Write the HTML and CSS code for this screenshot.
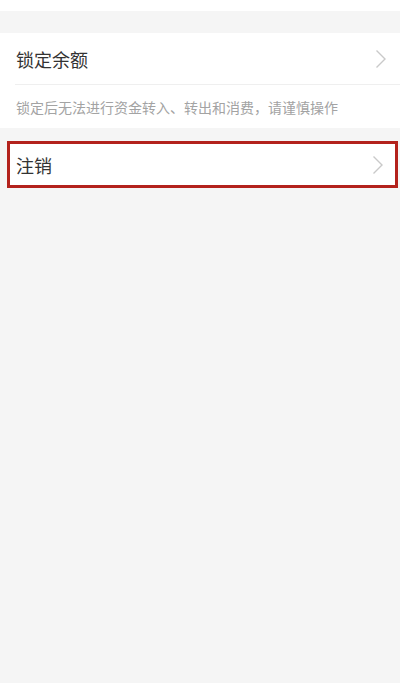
FILE: index.html
```html
<!DOCTYPE html>
<html lang="zh-CN">
<head>
<meta charset="utf-8">
<link rel="stylesheet" href="styles.css">
</head>
<body>
<div class="top"></div>
<div class="card">
  <div class="row">
    <span class="label">锁定余额</span>
    <svg class="chev" width="12" height="20" viewBox="0 0 12 20"><path d="M1.5 1.5 L10 10 L1.5 18.5" fill="none" stroke="#c9c9c9" stroke-width="1.4"/></svg>
  </div>
  <div class="sep"></div>
  <div class="desc">锁定后无法进行资金转入、转出和消费，请谨慎操作</div>
</div>
<div class="highlight">
  <div class="row row-small">
    <span class="label">注销</span>
    <svg class="chev" width="12" height="20" viewBox="0 0 12 20"><path d="M1.5 1.5 L10 10 L1.5 18.5" fill="none" stroke="#c9c9c9" stroke-width="1.4"/></svg>
  </div>
</div>
</body>
</html>
```
FILE: styles.css
```css
html, body {
  margin: 0;
  padding: 0;
  background: #f5f5f5;
  font-family: "Noto Sans CJK SC", "Noto Sans", sans-serif;
  width: 400px;
  height: 683px;
}
.top {
  height: 11px;
  background: #fff;
  margin-bottom: 22px;
}
.card {
  background: #fff;
  margin-bottom: 13px;
}
.row {
  height: 51px;
  display: flex;
  align-items: center;
  justify-content: space-between;
  padding: 0 13px 0 16px;
  background: #fff;
}
.row-small {
  height: 41px;
  padding-left: 6px;
  padding-right: 11px;
}
.label {
  font-size: 18px;
  color: #333;
  line-height: 1;
}
.chev {
  display: block;
}
.sep {
  height: 1px;
  background: #efefef;
  margin-left: 15px;
}
.desc {
  height: 43px;
  display: flex;
  align-items: center;
  padding-left: 16px;
  font-size: 14px;
  color: #a3a3a3;
}
.highlight {
  margin: 0 2px 0 7px;
  border: 3px solid #b3221c;
  background: #fff;
}
```
